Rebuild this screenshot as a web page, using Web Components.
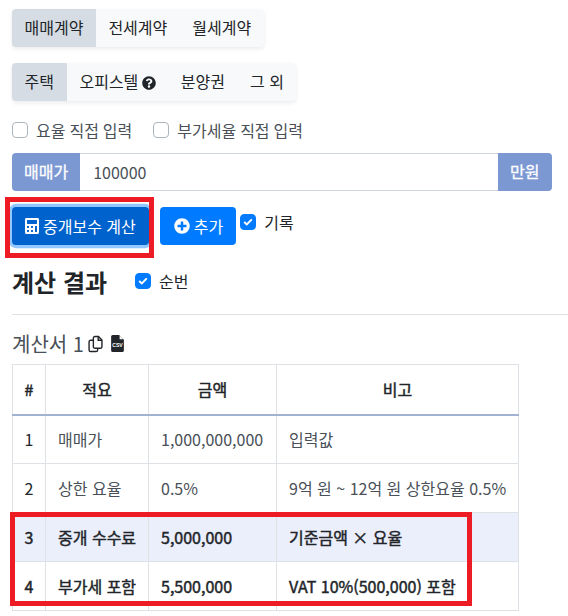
<!DOCTYPE html>
<html lang="ko"><head><meta charset="utf-8"><title>중개보수 계산</title>
<style>
html,body{margin:0;padding:0;background:#fff}
body{font:16px/24px "Noto Sans CJK KR","Noto Sans",sans-serif;color:#212529;height:616px;overflow:hidden;position:relative}
</style></head><body>
<broker-page></broker-page>
<red-box style="left:5px;top:197px;width:149px;height:61px"></red-box>
<red-box style="left:10px;top:512px;width:462px;height:94px"></red-box>
<template id="t-page">
<style>
:host{display:flex;flex-direction:column;padding:9px 16px 0 12px;box-sizing:border-box;width:568px}
.row{display:flex;align-items:center}
.checks{gap:21px;margin-top:17px;height:24px;color:#495057;word-spacing:-.5px}
.actions{margin-top:16px;gap:0;align-items:flex-start}
.gap{width:11px}
.title{display:flex;align-items:center;margin-top:13px;height:46px}
h2{font-size:24px;line-height:32px;font-weight:700;margin:0 28px 0 0;color:#212529;position:relative;top:1px}
hr{border:0;border-top:1px solid #dee2e6;margin:10px -16px 0 0;width:556px}
.sub{display:flex;align-items:center;font-size:20px;margin-top:15px;height:27px;color:#495057;line-height:27px}
.sub svg{display:block}
input-row{margin-top:11px}
</style>
<btn-group style="margin-bottom:16px"><seg-btn active>매매계약</seg-btn><seg-btn>전세계약</seg-btn><seg-btn>월세계약</seg-btn></btn-group>
<btn-group><seg-btn active style="padding-right:13px">주택</seg-btn><seg-btn style="padding-right:12.500px">오피스텔 <svg style="vertical-align:-2px;margin-left:-1px" width="14" height="14" viewBox="0 0 512 512"><path fill="#212529" d="M504 256c0 137-111 248-248 248S8 393 8 256 119 8 256 8s248 111 248 248zM262.700 90c-54.500 0-89.300 23-116.500 63.800-3.500 5.300-2.400 12.400 2.700 16.300l34.700 26.300c5.200 3.900 12.600 3 16.700-2.100 17.900-22.700 30.100-35.800 57.300-35.800 20.400 0 45.700 13.100 45.700 32.900 0 15-12.400 22.700-32.500 34-23.500 13.200-54.600 29.600-54.600 70.700V300c0 6.600 5.400 12 12 12h56c6.600 0 12-5.400 12-12v-1.300c0-28.500 83.200-29.700 83.200-106.700 0-58-60.200-102-116.500-102zM256 338c-25.400 0-46 20.600-46 46s20.600 46 46 46 46-20.600 46-46-20.600-46-46-46z"/></svg></seg-btn><seg-btn>분양권</seg-btn><seg-btn>그 외</seg-btn></btn-group>
<div class="row checks"><chk-box>요율 직접 입력</chk-box><chk-box>부가세율 직접 입력</chk-box></div>
<input-row></input-row>
<div class="row actions">
<pri-btn focus><svg width="14" height="16" viewBox="0 0 448 512" style="margin-right:4px"><path fill="#fff" d="M400 0H48C22.400 0 0 22.400 0 48v416c0 25.600 22.400 48 48 48h352c25.600 0 48-22.400 48-48V48c0-25.600-22.400-48-48-48zM128 435c0 6.400-6.400 12.800-12.800 12.800H76.800c-6.400 0-12.800-6.400-12.800-12.800v-38.400c0-6.400 6.400-12.800 12.800-12.800h38.400c6.400 0 12.800 6.400 12.800 12.800zm0-128c0 6.400-6.400 12.800-12.800 12.800H76.800c-6.400 0-12.800-6.400-12.800-12.800v-38.400c0-6.400 6.400-12.800 12.800-12.800h38.400c6.400 0 12.800 6.400 12.800 12.800zm128 128c0 6.400-6.400 12.800-12.800 12.800h-38.400c-6.400 0-12.800-6.400-12.800-12.800v-38.400c0-6.400 6.400-12.800 12.800-12.800h38.400c6.400 0 12.800 6.400 12.800 12.800zm0-128c0 6.400-6.400 12.800-12.800 12.800h-38.400c-6.400 0-12.800-6.400-12.800-12.800v-38.400c0-6.400 6.400-12.800 12.800-12.800h38.400c6.400 0 12.800 6.400 12.800 12.800zm128 128c0 6.400-6.400 12.800-12.800 12.800h-38.400c-6.400 0-12.800-6.400-12.800-12.800V268.800c0-6.400 6.400-12.800 12.800-12.800h38.400c6.400 0 12.800 6.400 12.800 12.800zm0-256c0 6.400-6.400 12.800-12.800 12.800H76.800c-6.400 0-12.800-6.400-12.800-12.800V76.800C64 70.400 70.400 64 76.800 64h294.400c6.400 0 12.800 6.400 12.800 12.800z"/></svg>중개보수 계산</pri-btn>
<span class="gap"></span>
<pri-btn style="padding-left:14px"><svg width="16" height="16" viewBox="0 0 512 512" style="margin-right:4px"><path fill="#fff" d="M256 8C119 8 8 119 8 256s111 248 248 248 248-111 248-248S393 8 256 8zm144 276c0 6.600-5.400 12-12 12h-92v92c0 6.600-5.400 12-12 12h-56c-6.600 0-12-5.400-12-12v-92h-92c-6.600 0-12-5.400-12-12v-56c0-6.600 5.400-12 12-12h92v-92c0-6.600 5.400-12 12-12h56c6.600 0 12 5.400 12 12v92h92c6.600 0 12 5.400 12 12z"/></svg>추가</pri-btn>
<chk-box checked style="margin-left:4px;margin-top:3px;--g:8px">기록</chk-box>
</div>
<div class="title"><h2>계산 결과</h2><chk-box checked style="color:#212529;--g:8px">순번</chk-box></div>
<hr>
<div class="sub">계산서 1<svg style="margin-left:4px" width="15" height="18" viewBox="0 0 14 16" fill="none" stroke="#212529" stroke-width="1.300"><path d="M5 4.500H2.500a1.500 1.500 0 0 0-1.500 1.500v7.500a1.500 1.500 0 0 0 1.500 1.500h5a1.500 1.500 0 0 0 1.500-1.500V12"/><path d="M5 2.500a1.500 1.500 0 0 1 1.500-1.500h3.300L13 4.200v6.300a1.500 1.500 0 0 1-1.500 1.500h-5A1.500 1.500 0 0 1 5 10.500z"/><path d="M9.500 1v3.500H13"/></svg><svg style="margin-left:8px" width="13" height="17" viewBox="0 0 12 16"><path fill="#212529" d="M1.500 0H7.500L12 4.500V14.500A1.500 1.500 0 0 1 10.500 16H1.500A1.500 1.500 0 0 1 0 14.500V1.500A1.500 1.500 0 0 1 1.500 0Z"/><path fill="#fff" d="M8 0.500 11.500 4H8Z"/><text x="6" y="11.500" font-size="4.800" font-weight="700" text-anchor="middle" fill="#fff" font-family="Liberation Sans">CSV</text></svg></div>
<fee-table></fee-table>
</template>
<template id="t-group"><style>:host{display:flex;width:max-content;border-radius:4px;box-shadow:0 2px 4px rgba(0,0,0,.08);background:#f8f9fa;overflow:hidden}</style><slot></slot></template>
<template id="t-seg"><style>:host{display:block;height:38px;line-height:37px;padding:0 12.500px;color:#212529;white-space:nowrap;box-sizing:border-box}:host([active]){background:#d6dce4}</style><slot></slot></template>
<template id="t-check"><style>
:host{display:inline-flex;align-items:center;height:24px;white-space:nowrap}
.b{width:16px;height:16px;box-sizing:border-box;border:1px solid #adb5bd;border-radius:4px;background:#fff;margin-right:var(--g,8px);display:flex;align-items:center;justify-content:center}
:host([checked]) .b{background:#007bff;border-color:#007bff}
svg{display:none}:host([checked]) svg{display:block}
</style><span class="b"><svg width="10" height="8" viewBox="0 0 10 8"><path d="M1.200 4 3.800 6.400 8.800 1.400" fill="none" stroke="#fff" stroke-width="2"/></svg></span><slot></slot></template>
<template id="t-input"><style>
:host{display:flex;height:38px;width:540px}
.a{background:#7b98d3;color:#fff;padding:0 12px;line-height:37px;display:block;-webkit-text-stroke:.3px #fff}
.l{border-radius:4px 0 0 4px}.r{border-radius:0 4px 4px 0;padding:0 12.500px}
.f{flex:1;border:1px solid #ced4da;border-width:1px 0;padding:0 13px;line-height:36px;color:#495057;box-sizing:border-box}
</style><span class="a l">매매가</span><span class="f">100000</span><span class="a r">만원</span></template>
<template id="t-btn"><style>
:host{display:inline-flex;align-items:center;height:38px;padding:0 13px 0 13px;background:#007bff;color:#fff;border-radius:4px;white-space:nowrap;box-sizing:border-box}
:host([focus]){background:#0062cc;box-shadow:0 0 0 3.200px rgba(38,143,255,.5)}
</style><slot></slot></template>
<template id="t-table"><style>
:host{display:block;margin-top:7px;width:506px}
table{border-collapse:collapse;table-layout:fixed;width:506px;color:#212529}
th,td{border:1px solid #dee2e6;padding:0 12px;white-space:nowrap;height:49px;box-sizing:border-box;line-height:24px;color:#495057}
th{font-weight:400;-webkit-text-stroke:.45px #212529;text-align:center;height:50px;border-bottom:2px solid #a2b3d2;color:#212529}
th:first-child,td:first-child{padding:0;text-align:center}
td:first-child{color:#212529}
.s td{font-weight:400;-webkit-text-stroke:.45px #212529;color:#212529}
.h td{background:#ebeefb}
</style><table><colgroup><col style="width:33px"><col style="width:103px"><col style="width:128px"><col style="width:242px"></colgroup>
<thead><tr><th>#</th><th>적요</th><th>금액</th><th>비고</th></tr></thead>
<tbody><tr><td>1</td><td>매매가</td><td>1,000,000,000</td><td>입력값</td></tr>
<tr><td>2</td><td>상한 요율</td><td>0.5%</td><td>9억 원 ~ 12억 원 상한요율 0.5%</td></tr>
<tr class="s h"><td>3</td><td>중개 수수료</td><td>5,000,000</td><td>기준금액 × 요율</td></tr>
<tr class="s"><td>4</td><td>부가세 포함</td><td>5,500,000</td><td>VAT 10%(500,000) 포함</td></tr></tbody></table></template>
<template id="t-red"><style>:host{display:block;position:absolute;box-sizing:border-box;border:5px solid #ed1c24;pointer-events:none}</style></template>
<script>
const reg=(n,t)=>customElements.define(n,class extends HTMLElement{constructor(){super();this.attachShadow({mode:"open"}).appendChild(document.getElementById(t).content.cloneNode(true))}});
reg("btn-group","t-group");reg("seg-btn","t-seg");reg("chk-box","t-check");reg("input-row","t-input");reg("pri-btn","t-btn");reg("fee-table","t-table");reg("red-box","t-red");reg("broker-page","t-page");
</script>
</body></html>
